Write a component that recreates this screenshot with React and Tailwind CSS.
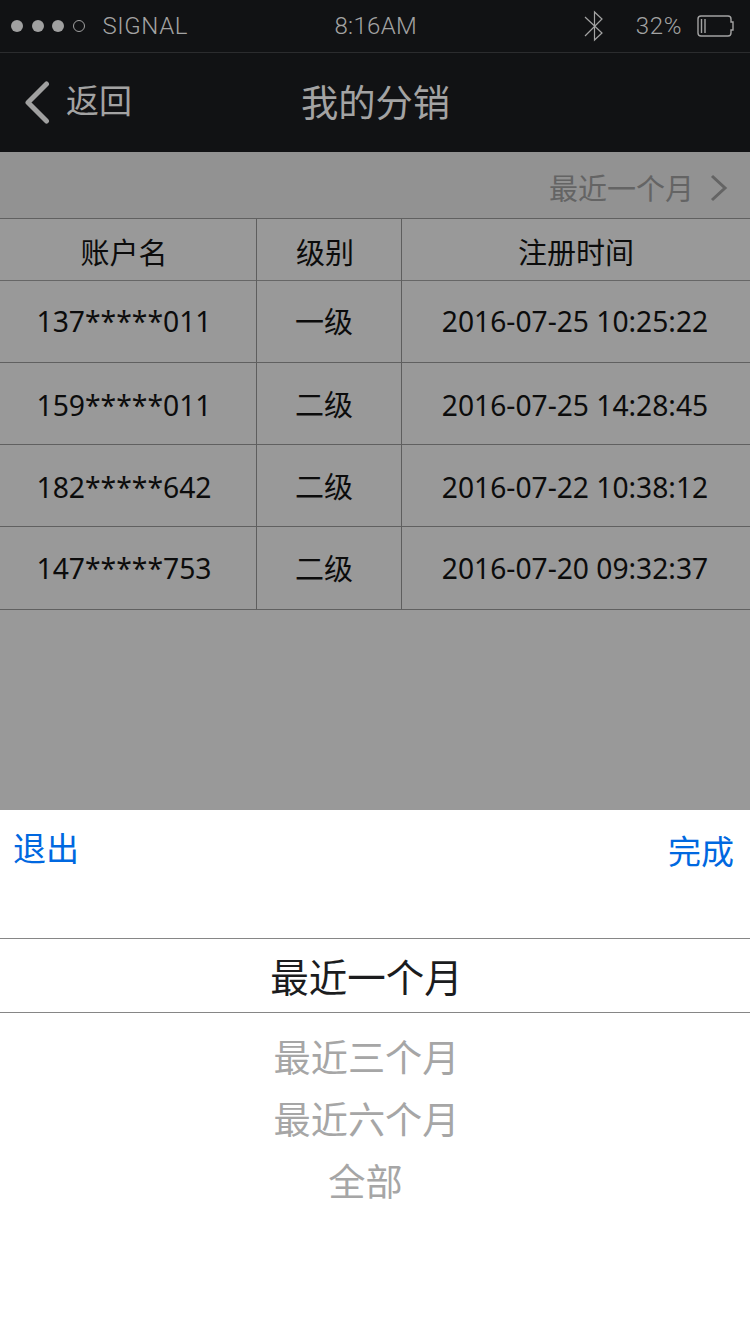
const accounts = [
    { name: '137*****011', level: '一级', time: '2016-07-25 10:25:22', row: 'h-[82px] leading-[81px]' },
    { name: '159*****011', level: '二级', time: '2016-07-25 14:28:45', row: 'h-[82px] leading-[84px]' },
    { name: '182*****642', level: '二级', time: '2016-07-22 10:38:12', row: 'h-[82px] leading-[84px]' },
    { name: '147*****753', level: '二级', time: '2016-07-20 09:32:37', row: 'h-[83px] leading-[83px]' },
];

const StatusBar = () => (
    <div className="flex h-[53px] items-center border-b border-[#2b2c2e] pl-[11px] pr-4 font-['Roboto',sans-serif] text-2xl font-light text-[#a3a3a3]">
        <div className="flex items-center gap-[8.500px]">
            <span className="size-3 rounded-full bg-[#a0a0a0]" />
            <span className="size-3 rounded-full bg-[#a0a0a0]" />
            <span className="size-3 rounded-full bg-[#a0a0a0]" />
            <span className="size-3 rounded-full border border-[#a0a0a0]" />
        </div>
        <span className="ml-[18px] w-[232px] tracking-[0.600px]">SIGNAL</span>
        <span className="tracking-[0.300px]">8:16AM</span>
        <svg className="ml-auto" width="20" height="32" viewBox="0 0 20 32" fill="none" stroke="#a3a3a3" strokeWidth="1.2">
            <path d="M1 7 18 23 10.500 30V2L18 9 1 26" />
        </svg>
        <span className="ml-8 tracking-[0.600px]">32%</span>
        <svg className="ml-[14px]" width="38" height="22" viewBox="0 0 38 22" fill="none" stroke="#a3a3a3" strokeWidth="1.4">
            <path d="M5 1H32Q35 1 35 4V7H37V15H35V18Q35 21 32 21H5Q2 21 2 18V4Q2 1 5 1Z" />
            <path d="M5.500 4V18M9 4V18" />
        </svg>
    </div>
);

const NavBar = () => (
    <div className="grid h-[99px] grid-cols-[250px_250px_250px] items-center text-[#a3a3a3]">
        <button className="flex items-center pl-6 text-left text-[33px]">
            <svg className="mr-4" width="26" height="44" viewBox="0 0 26 44" fill="none" stroke="#a0a0a0" strokeWidth="5" strokeLinecap="round" strokeLinejoin="round">
                <path d="M22.500 3 4 21.500 22.500 40" />
            </svg>
            <span className="pb-[3px]">返回</span>
        </button>
        <h1 className="pl-px text-center text-[37.300px]">我的分销</h1>
    </div>
);

const AccountTable = () => (
    <div className="text-[29px] text-[#0c0c0c]">
        <div className="grid h-[62px] grid-cols-[257px_145px_348px] border-b border-[#666] text-center leading-[67px]">
            <div className="border-r border-[#5e5e5e] pr-2">账户名</div>
            <div className="border-r border-[#5e5e5e] pr-2">级别</div>
            <div>注册时间</div>
        </div>
        {accounts.map((account) => (
            <div
                key={account.name}
                className={`grid grid-cols-[257px_145px_348px] border-b border-[#606060] text-center ${account.row}`}
            >
                <div className="border-r border-[#5e5e5e] pr-2 text-[28.300px]">{account.name}</div>
                <div className="border-r border-[#5e5e5e] pr-[10px]">{account.level}</div>
                <div className="pr-0.5 text-[28.200px]">{account.time}</div>
            </div>
        ))}
    </div>
);

const PeriodPicker = () => (
    <div className="h-[524px] bg-white">
        <div className="flex h-32 items-start justify-between pl-[13px] pr-4 text-[33px] text-[#0068e0]">
            <button className="mt-[14px] leading-[50px]">退出</button>
            <button className="mt-[17px] leading-[50px]">完成</button>
        </div>
        <div className="h-[75px] border-y border-[#868686] pr-[17px] text-center text-[38.500px] leading-[76px] text-[#1b1c1e]">
            最近一个月
        </div>
        <div className="flex flex-col items-center pr-[17px] pt-[14px] text-[37.200px] leading-[62px] text-[#a6a6a6]">
            <div>最近三个月</div>
            <div>最近六个月</div>
            <div className="pr-0.5">全部</div>
        </div>
    </div>
);

const App = () => {
    return (
        <div className="h-[1334px] w-[750px] overflow-hidden bg-[#999] font-['Noto_Sans','Noto_Sans_CJK_SC',sans-serif]">
            <header className="bg-[#111214]">
                <StatusBar />
                <NavBar />
            </header>
            <main className="h-[658px]">
                <div className="flex h-[67px] items-center justify-end border-b border-[#606060] bg-[#929292] pr-[22px] pt-2 text-[29px] text-[#646464]">
                    最近一个月
                    <svg className="mb-0.5 ml-4" width="18" height="28" viewBox="0 0 18 28" fill="none" stroke="#646464" strokeWidth="3">
                        <path d="M2 2 15 14 2 26" />
                    </svg>
                </div>
                <AccountTable />
            </main>
            <PeriodPicker />
        </div>
    );
};

export default App;
